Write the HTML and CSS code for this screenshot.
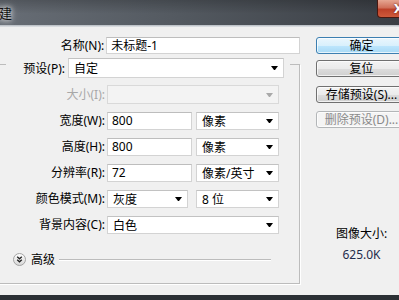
FILE: index.html
```html
<!DOCTYPE html>
<html lang="zh-CN">
<head>
  <meta charset="UTF-8" />
  <meta name="viewport" content="width=device-width, initial-scale=1.0"/>
  <title>新建</title>
  <link rel="stylesheet" href="styles.css">
</head>
<body>
  <div class="window">
    <!-- 标题栏 -->
    <div class="titlebar">
      <span class="title">新建</span>
      <button class="close-btn">X</button>
    </div>
    <div class="title-edge"></div>

    <!-- 对话框内容 -->
    <div class="dialog">
      <div class="form-col">
        <div class="field-row name-row">
          <label class="field-label">名称(N):</label>
          <div class="textbox name-box">未标题-1</div>
        </div>

        <div class="group-box">
          <div class="group-head">
            <label class="head-label">预设(P):</label>
            <div class="select preset-select"><span>自定</span><i class="arrow"></i></div>
          </div>

          <div class="field-row size-row">
            <label class="field-label disabled">大小(I):</label>
            <div class="select select-disabled wide"><span></span><i class="arrow"></i></div>
          </div>

          <div class="field-row">
            <label class="field-label">宽度(W):</label>
            <div class="textbox num-box">800</div>
            <div class="select unit-select"><span>像素</span><i class="arrow"></i></div>
          </div>

          <div class="field-row">
            <label class="field-label">高度(H):</label>
            <div class="textbox num-box">800</div>
            <div class="select unit-select"><span>像素</span><i class="arrow"></i></div>
          </div>

          <div class="field-row">
            <label class="field-label">分辨率(R):</label>
            <div class="textbox num-box">72</div>
            <div class="select unit-select"><span>像素/英寸</span><i class="arrow"></i></div>
          </div>

          <div class="field-row">
            <label class="field-label">颜色模式(M):</label>
            <div class="select mode-select"><span>灰度</span><i class="arrow"></i></div>
            <div class="select bit-select"><span>8 位</span><i class="arrow"></i></div>
          </div>

          <div class="field-row">
            <label class="field-label">背景内容(C):</label>
            <div class="select wide"><span>白色</span><i class="arrow"></i></div>
          </div>

          <!-- 高级 -->
          <div class="advanced-row">
            <svg class="advanced-icon" width="13" height="13" viewBox="0 0 13 13">
              <defs>
                <linearGradient id="adv" x1="0" y1="0" x2="0" y2="1">
                  <stop offset="0" stop-color="#ffffff"/>
                  <stop offset="1" stop-color="#d6d6d6"/>
                </linearGradient>
              </defs>
              <circle cx="6.5" cy="6.5" r="6" fill="url(#adv)" stroke="#a3a3a3"/>
              <polyline points="4.2,3.8 6.5,5.8 8.8,3.8" fill="none" stroke="#222" stroke-width="1.3"/>
              <polyline points="4.2,6.8 6.5,8.8 8.8,6.8" fill="none" stroke="#222" stroke-width="1.3"/>
            </svg>
            <span class="advanced-label">高级</span>
            <span class="advanced-line"></span>
          </div>
        </div>
      </div>

      <div class="side-col">
        <button class="btn btn-default">确定</button>
        <button class="btn btn-reset">复位</button>
        <button class="btn btn-save">存储预设(S)...</button>
        <button class="btn btn-disabled">删除预设(D)...</button>

        <div class="image-size">
          <div>图像大小:</div>
          <div class="image-size-value">625.0K</div>
        </div>
      </div>
    </div>

    <div class="frame-bottom"></div>
  </div>
</body>
</html>
```

FILE: styles.css
```css
* {
  box-sizing: border-box;
}

body {
  margin: 0;
  font-family: "Noto Sans", "Noto Sans CJK SC", sans-serif;
  font-size: 12px;
  color: #000;
  background: #2c3035;
}

.window {
  width: 399px;
  height: 300px;
  overflow: hidden;
  background: #2c3035;
}

/* 标题栏 */
.titlebar {
  height: 25px;
  display: flex;
  justify-content: space-between;
  align-items: flex-start;
  background:
    linear-gradient(to bottom, rgba(0, 0, 0, 0.2), rgba(0, 0, 0, 0) 55%),
    linear-gradient(to right, #676d75, #535960 45%, #3a3e44);
}

.title {
  margin: 5px 0 0 -14px;
  font-family: "Noto Sans CJK SC", sans-serif;
  font-size: 13px;
  line-height: 16px;
  color: #111;
  text-shadow: 0 0 5px #fff, 0 0 9px rgba(255, 255, 255, 0.8);
}

.close-btn {
  width: 43px;
  height: 18px;
  margin-right: -21px;
  padding: 0;
  border: 1px solid #4a1810;
  border-top: none;
  border-radius: 0 0 4px 4px;
  background: linear-gradient(to bottom, #e6a692, #d0705a 45%, #bd4129 55%, #cf5a3b);
  color: #fff;
  font-family: "DejaVu Sans", sans-serif;
  font-weight: bold;
  font-size: 12px;
  line-height: 16px;
  text-shadow: 0 0 2px #5a1a10;
}

.title-edge {
  height: 2px;
  background: linear-gradient(to bottom, #b3b9bf, #e3e6e9);
}

/* 对话框 */
.dialog {
  display: flex;
  gap: 16px;
  width: 420px;
  height: 268px;
  margin-left: -10px;
  background: #f0f0f0;
}

.form-col {
  width: 310px;
  padding-top: 10px;
}

.field-row {
  display: flex;
  align-items: center;
  height: 18px;
  margin-top: 8px;
}

.field-label {
  width: 114px;
  margin-right: 2px;
  text-align: right;
  white-space: nowrap;
  line-height: 16px;
}

.field-label.disabled {
  color: #a8a8a8;
}

.name-row {
  height: 17px;
  margin-top: 0;
}

.name-row .field-label {
  width: 115px;
}

.textbox {
  height: 100%;
  padding: 0 4px;
  background: #fff;
  border: 1px solid #d3d3d3;
  border-top-color: #bdbdbd;
  line-height: 15px;
  white-space: nowrap;
}

.name-box {
  width: 195px;
}

.num-box {
  width: 85px;
}

.select {
  height: 100%;
  display: flex;
  align-items: center;
  justify-content: space-between;
  padding: 0 5px;
  background: #fff;
  border: 1px solid #d3d3d3;
  border-top-color: #c2c2c2;
  white-space: nowrap;
  line-height: 15px;
}

.arrow {
  width: 1px;
  height: 0;
  border-left: 3px solid transparent;
  border-right: 3px solid transparent;
  border-top: 4px solid #000;
  box-sizing: content-box;
}

.wide {
  width: 172px;
}

.unit-select {
  width: 83px;
  margin-left: 4px;
}

.mode-select {
  width: 81px;
}

.bit-select {
  width: 83px;
  margin-left: 8px;
}

.select-disabled {
  background: #f3f3f3;
  border-color: #d9d9d9;
  padding-right: 0;
}

.select-disabled .arrow {
  border-top-color: #a9a9a9;
  margin-right: 5px;
}

/* 预设分组框 */
.group-box {
  height: 220px;
  margin-top: 10px;
  border: 1px solid #bcbcbc;
  box-shadow: 1px 1px 0 #fff;
}

.group-head {
  display: flex;
  align-items: center;
  width: 284px;
  height: 20px;
  margin: -7px 0 0 15px;
  background: #f0f0f0;
}

.head-label {
  width: 59px;
  margin-right: 3px;
  text-align: right;
  white-space: nowrap;
}

.preset-select {
  width: 216px;
}

.size-row {
  height: 19px;
  margin-top: 7px;
}

.advanced-row {
  display: flex;
  align-items: center;
  height: 13px;
  margin: 19px 28px 0 22px;
}

.advanced-icon {
  display: block;
  flex-shrink: 0;
}

.advanced-label {
  margin-left: 5px;
  line-height: 13px;
}

.advanced-line {
  flex: 1;
  margin-left: 4px;
  border-top: 1px solid #bcbcbc;
  border-bottom: 1px solid #fff;
}

/* 右侧按钮 */
.side-col {
  width: 91px;
  padding-top: 10px;
  display: flex;
  flex-direction: column;
  flex-shrink: 0;
}

.btn {
  height: 17px;
  padding: 0;
  border: 1px solid #707070;
  border-radius: 3px;
  background: linear-gradient(to bottom, #f3f3f3, #ebebeb 50%, #dddddd 51%, #cfcfcf);
  box-shadow: inset 0 0 0 1px rgba(255, 255, 255, 0.7);
  font: inherit;
  line-height: 14px;
  color: #000;
  white-space: nowrap;
}

.btn-default {
  border-color: #3c7fb1;
  background: linear-gradient(to bottom, #eaf6fd, #d9f0fc 50%, #bee6fd 51%, #a7d9f5);
}

.btn-reset {
  margin-top: 6px;
}

.btn-save {
  margin-top: 9px;
}

.btn-disabled {
  margin-top: 8px;
  border-color: #b3b6b8;
  background: #f4f4f4;
  color: #8a8a8a;
}

.image-size {
  margin-top: 98px;
  text-align: center;
  line-height: 16px;
}

.image-size-value {
  margin-top: 5px;
  color: #1f2c4c;
}

.frame-bottom {
  height: 5px;
  background: #2c3035;
}
```
